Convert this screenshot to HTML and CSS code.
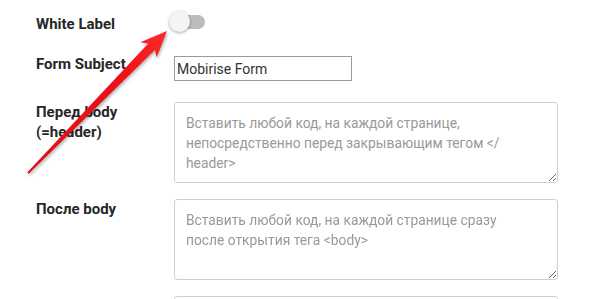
FILE: index.html
```html
<!DOCTYPE html>
<html lang="ru">
<head>
<meta charset="utf-8">
<link rel="stylesheet" href="styles.css">
</head>
<body>
<div class="form">
  <div class="row row-toggle">
    <div class="label">White Label</div>
    <div class="switch"><span class="track"></span><span class="knob"></span></div>
  </div>
  <div class="row row-input">
    <div class="label">Form Subject</div>
    <input class="input" type="text" value="Mobirise Form">
  </div>
  <div class="row row-area">
    <div class="label">Перед body<br>(=header)</div>
    <textarea class="area" placeholder="Вставить любой код, на каждой странице, непосредственно перед закрывающим тегом </&#8203;header>"></textarea>
  </div>
  <div class="row row-area2">
    <div class="label">После body</div>
    <textarea class="area" placeholder="Вставить любой код, на каждой странице сразу после открытия тега <body>"></textarea>
  </div>
  <div class="row row-area2 row-last">
    <div class="label">Перед /body<br>(=footer)</div>
    <textarea class="area" placeholder="Вставить любой код"></textarea>
  </div>
</div>
<svg class="arrow" width="597" height="299" viewBox="0 0 597 299">
  <defs>
    <linearGradient id="ag" x1="28" y1="173" x2="167" y2="31" gradientUnits="userSpaceOnUse">
      <stop offset="0" stop-color="#d8121a"/>
      <stop offset="0.7" stop-color="#f01018"/>
      <stop offset="1" stop-color="#ff2a2a"/>
    </linearGradient>
  </defs>
  <polygon class="arrow-shape" fill="url(#ag)" points="27.2,172.4 148.2,43.4 140.4,42.2 167,31 156.6,57.6 155,49.8 28.8,173.8"/>
</svg>
</body>
</html>
```
FILE: styles.css
```css
html, body {
  margin: 0;
  padding: 0;
  background: #ffffff;
}
body {
  width: 597px;
  height: 299px;
  overflow: hidden;
  position: relative;
  font-family: Roboto, "Liberation Sans", sans-serif;
}
.form {
  padding: 11px 0 0 36px;
}
.row {
  display: flex;
  align-items: flex-start;
}
.label {
  width: 138px;
  flex: none;
  font-size: 15px;
  line-height: 20px;
  font-weight: 700;
  color: #262626;
}
.row-toggle .label {
  margin-top: 3px;
  width: 133px;
}
.switch {
  position: relative;
  width: 38px;
  height: 22px;
}
.track {
  position: absolute;
  left: 11px;
  top: 4px;
  width: 25px;
  height: 14px;
  border-radius: 7px;
  background: #bcbcbc;
}
.knob {
  position: absolute;
  left: 0;
  top: 0;
  width: 21px;
  height: 21px;
  border-radius: 50%;
  background: #f4f4f4;
  box-shadow: 0 1px 3px rgba(0,0,0,0.35);
}
.row-input {
  margin-top: 22px;
}
.row-input .label {
  margin-top: -2px;
}
.row-last .label {
  margin-top: -1px;
}
.input {
  box-sizing: border-box;
  width: 178px;
  height: 25px;
  margin: 0;
  padding: 0 2px;
  border: 1px solid #9a9a9a;
  border-radius: 0;
  font-family: Roboto, "Liberation Sans", sans-serif;
  font-size: 14px;
  color: #333333;
  outline: none;
}
.row-area {
  margin-top: 21px;
}
.row-area2 {
  margin-top: 16px;
}
.area {
  box-sizing: border-box;
  width: 384px;
  height: 81px;
  margin: 0;
  padding: 10px 20px 10px 11px;
  border: 1px solid #cfcfcf;
  border-radius: 3px;
  font-family: Roboto, "Liberation Sans", sans-serif;
  font-size: 13.8px;
  line-height: 20px;
  color: #333333;
  resize: both;
  outline: none;
}
.area::placeholder {
  color: #999999;
}
.arrow {
  position: absolute;
  left: 0;
  top: 0;
  pointer-events: none;
}
.arrow-shape {
  filter: drop-shadow(1px 2px 1.5px rgba(0,0,0,0.3));
}
```
